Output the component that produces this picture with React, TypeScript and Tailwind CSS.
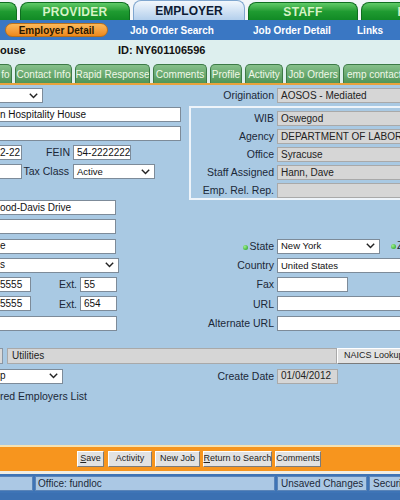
import React from 'react';
import clsx from 'clsx';

const Chev = () => (
  <svg width="9" height="6" viewBox="0 0 9 6" className="shrink-0">
    <path d="M0.8 0.8 L4.5 4.6 L8.2 0.8" fill="none" stroke="#222" strokeWidth="1.4" />
  </svg>
);

type FieldProps = { cls?: string; v?: string; gray?: boolean; cut?: boolean; sm?: boolean };

function Field({ cls, v = '', gray, cut, sm }: FieldProps) {
  return (
    <div
      className={clsx(
        'h-[15px] shrink-0 border flex items-center leading-none whitespace-nowrap overflow-hidden',
        sm ? 'text-[9.5px]' : 'text-[10px]',
        gray ? 'bg-[#d6d6d6] border-[#a9a9a9] text-[#222]' : 'bg-white border-[#7d8b99] text-[#111]',
        cut ? 'border-l-0 pl-0' : 'pl-[3px]',
        cls
      )}
    >
      {v}
    </div>
  );
}

function Select({ cls, v = '', cut, sm }: FieldProps) {
  return (
    <div
      className={clsx(
        'h-[15px] shrink-0 border bg-white border-[#7d8b99] flex items-center justify-between pr-[4px] leading-none whitespace-nowrap overflow-hidden text-[#111]',
        sm ? 'text-[9.5px]' : 'text-[10px]',
        cut ? 'border-l-0 pl-0' : 'pl-[3px]',
        cls
      )}
    >
      <span>{v}</span>
      <Chev />
    </div>
  );
}

function Label({ children, cls }: { children: React.ReactNode; cls?: string }) {
  return (
    <div className={clsx('shrink-0 text-right text-[10.5px] leading-none text-[#1b2838] whitespace-nowrap', cls)}>
      {children}
    </div>
  );
}

function RRow({ label, children, lw = 'w-[85px]' }: { label: React.ReactNode; children: React.ReactNode; lw?: string }) {
  return (
    <div className="flex items-center h-[15px] gap-[3px]">
      <Label cls={lw}>{label}</Label>
      {children}
    </div>
  );
}

function GreenTab({ children, cls }: { children?: React.ReactNode; cls?: string }) {
  return (
    <div
      className={clsx(
        'h-[18px] shrink-0 border border-b-0 border-[#0f6e20] bg-gradient-to-b from-[#5fcb68] via-[#1f9b31] to-[#118a25] flex items-center justify-center text-[12px] font-bold tracking-[0.3px] text-[#d6f3c6]',
        cls
      )}
    >
      {children}
    </div>
  );
}

function SubTab({ children, cls }: { children: React.ReactNode; cls?: string }) {
  return (
    <div
      className={clsx(
        'h-[19px] shrink-0 rounded-t-[5px] border border-b-0 border-[#3c7a46] bg-gradient-to-b from-[#86c08b] to-[#4f9557] flex items-center justify-center text-[10px] text-[#f0f8e8] whitespace-nowrap overflow-hidden',
        cls
      )}
    >
      {children}
    </div>
  );
}

function Dot() {
  return <span className="inline-block w-[5px] h-[5px] rounded-full bg-[radial-gradient(circle_at_35%_35%,#9ef08f,#1c9a1c)] mr-[1px] align-middle" />;
}

function Btn({ children, cls }: { children: React.ReactNode; cls?: string }) {
  return (
    <div
      className={clsx(
        'h-[16px] shrink-0 bg-[#e2e2e2] border border-t-white border-l-white border-b-[#7b7b7b] border-r-[#7b7b7b] flex items-center justify-center text-[9px] text-[#222] whitespace-nowrap',
        cls
      )}
    >
      {children}
    </div>
  );
}

export default function App() {
  return (
    <div className="w-[400px] h-[500px] overflow-hidden flex flex-col bg-[#a9c9e3] font-['Liberation_Sans',Arial,sans-serif]">
      {/* Module tabs */}
      <div className="h-[20px] shrink-0 flex items-end gap-[3px] bg-[#f3f6f9]">
        <GreenTab cls="w-[17px] border-l-0 rounded-tr-[8px]" />
        <GreenTab cls="w-[110px] rounded-t-[8px]">PROVIDER</GreenTab>
        <div className="w-[112px] h-[20px] shrink-0 rounded-t-[8px] border border-b-0 border-[#7fa6cf] bg-gradient-to-b from-[#f2f7fc] to-[#b3cfec] flex justify-center pt-[1px] text-[12px] font-bold text-[#0d1b33]">
          EMPLOYER
        </div>
        <GreenTab cls="w-[110px] rounded-t-[8px]">STAFF</GreenTab>
        <GreenTab cls="w-[110px] rounded-t-[8px]">HOME</GreenTab>
      </div>

      {/* Sub nav */}
      <div className="h-[20px] shrink-0 flex items-center bg-[#3a77c3] text-[10px] font-bold text-white whitespace-nowrap">
        <div className="ml-[5px] w-[103px] h-[14px] shrink-0 rounded-full border border-[#b9701b] bg-gradient-to-b from-[#fbb959] to-[#ee8816] flex items-center justify-center text-[#2a1800]">
          Employer Detail
        </div>
        <span className="ml-[22px] w-[123px] shrink-0">Job Order Search</span>
        <span className="w-[104px] shrink-0">Job Order Detail</span>
        <span className="shrink-0">Links</span>
      </div>

      {/* Title */}
      <div className="h-[21px] shrink-0 flex items-center bg-[#ddefee] text-[11px] font-bold text-[#111] whitespace-nowrap">
        <span className="w-[118px] shrink-0">ouse</span>
        <span>ID: NY601106596</span>
      </div>

      {/* Section tabs */}
      <div className="h-[22px] shrink-0 flex items-end gap-[3px] bg-[#ddefee]">
        <SubTab cls="w-[12px] rounded-tl-none border-l-0">fo</SubTab>
        <SubTab cls="w-[57px]">Contact Info</SubTab>
        <SubTab cls="w-[75px]">Rapid Response</SubTab>
        <SubTab cls="w-[54px]">Comments</SubTab>
        <SubTab cls="w-[32px]">Profile</SubTab>
        <SubTab cls="w-[38px]">Activity</SubTab>
        <SubTab cls="w-[54px]">Job Orders</SubTab>
        <SubTab cls="w-[80px] justify-start pl-[3px]">emp contacts</SubTab>
      </div>
      <div className="h-[2px] shrink-0 bg-[#e9a23c]" />

      {/* Body */}
      <div className="flex-1 min-h-0 overflow-hidden pt-[3px]">
        <div className="flex">
          <div className="w-[189px] shrink-0 flex flex-col">
            <Select cut cls="w-[43px]" />
            <Field cut cls="w-[181px] mt-[4px]" v="n Hospitality House" />
            <Field cut cls="w-[181px] mt-[4px]" />
            <div className="flex items-center h-[15px] mt-[4px]">
              <Field cut cls="w-[22px]" v="2-22" />
              <Label cls="w-[48px]">FEIN</Label>
              <Field cls="w-[58px] ml-[3px]" v="54-2222222" />
            </div>
            <div className="flex items-center h-[15px] mt-[4px]">
              <Field cut cls="w-[22px]" />
              <Label cls="w-[47px]">Tax Class</Label>
              <Select cls="w-[82px] ml-[4px]" v="Active" sm />
            </div>
          </div>
          <div className="w-[260px] shrink-0 flex flex-col">
            <RRow label="Origination">
              <Field gray cls="w-[160px]" v="AOSOS - Mediated" />
            </RRow>
            <div className="mt-[3px] border-t-2 border-l-2 border-b-2 border-[#eef4fa] pt-[3px] flex flex-col gap-[3px]">
              <RRow label="WIB" lw="w-[83px]">
                <Field gray cls="w-[160px]" v="Oswegod" />
              </RRow>
              <RRow label="Agency" lw="w-[83px]">
                <Field gray cls="w-[160px]" v="DEPARTMENT OF LABOR" />
              </RRow>
              <RRow label="Office" lw="w-[83px]">
                <Field gray cls="w-[160px]" v="Syracuse" />
              </RRow>
              <RRow label="Staff Assigned" lw="w-[83px]">
                <Field gray cls="w-[160px]" v="Hann, Dave" />
              </RRow>
              <RRow label="Emp. Rel. Rep." lw="w-[83px]">
                <Field gray cls="w-[160px]" />
              </RRow>
            </div>
          </div>
        </div>

        {/* Address / contact rows */}
        <div className="flex flex-col gap-[4.3px]">
          <div className="flex items-center h-[15px]">
            <Field cut cls="w-[116px]" v="ood-Davis Drive" />
          </div>
          <div className="flex items-center h-[15px]">
            <Field cut cls="w-[116px]" />
          </div>
          <div className="flex items-center h-[15px]">
            <div className="w-[189px] shrink-0">
              <Field cut cls="w-[116px]" v="e" />
            </div>
            <RRow
              label={
                <>
                  <Dot />
                  State
                </>
              }
            >
              <Select cls="w-[103px]" v="New York" sm />
              <span className="ml-[8px] text-[10.5px] text-[#1b2838] whitespace-nowrap">
                <Dot />
                Zip
              </span>
            </RRow>
          </div>
          <div className="flex items-center h-[15px]">
            <div className="w-[189px] shrink-0">
              <Select cut cls="w-[119px]" v="s" />
            </div>
            <RRow label="Country">
              <Field cls="w-[160px]" v="United States" sm />
            </RRow>
          </div>
          <div className="flex items-center h-[15px]">
            <div className="w-[189px] shrink-0 flex items-center">
              <Field cut cls="w-[31px]" v="5555" />
              <Label cls="w-[46px]">Ext.</Label>
              <Field cls="w-[37px] ml-[3px]" v="55" />
            </div>
            <RRow label="Fax">
              <Field cls="w-[71px]" />
            </RRow>
          </div>
          <div className="flex items-center h-[15px]">
            <div className="w-[189px] shrink-0 flex items-center">
              <Field cut cls="w-[31px]" v="5555" />
              <Label cls="w-[46px]">Ext.</Label>
              <Field cls="w-[37px] ml-[3px]" v="654" />
            </div>
            <RRow label="URL">
              <Field cls="w-[160px]" />
            </RRow>
          </div>
          <div className="flex items-center h-[15px]">
            <div className="w-[189px] shrink-0">
              <Field cut cls="w-[117px]" />
            </div>
            <RRow label="Alternate URL">
              <Field cls="w-[160px]" />
            </RRow>
          </div>
        </div>

        {/* Industry */}
        <div className="flex items-center h-[16px] mt-[17px]">
          <div className="w-[3px] h-[16px] shrink-0 border border-l-0 border-[#8a96a3] bg-[#d9d9d9]" />
          <Field gray cls="w-[330px] h-[16px] ml-[4px] pl-[4px]" v="Utilities" />
          <Btn cls="w-[80px] h-[16px] justify-start pl-[6px] text-[9.5px]">NAICS Lookup</Btn>
        </div>
        <div className="flex items-center h-[15px] mt-[5px]">
          <div className="w-[189px] shrink-0">
            <Select cut cls="w-[63px]" v="p" />
          </div>
          <RRow label="Create Date">
            <Field gray cls="w-[61px]" v="01/04/2012" />
          </RRow>
        </div>
        <div className="mt-[6px] text-[10.5px] leading-[13px] text-[#1b2838] whitespace-nowrap">red Employers List</div>
      </div>

      {/* Action bar */}
      <div className="h-[2px] shrink-0 bg-[#f6e2b2]" />
      <div className="h-[24px] shrink-0 bg-[#f7951e] flex items-center">
        <Btn cls="ml-[77px] w-[27px]">
          <span className="underline">S</span>ave
        </Btn>
        <Btn cls="ml-[4px] w-[44px]">Activity</Btn>
        <Btn cls="ml-[3px] w-[45px]">New Job</Btn>
        <Btn cls="ml-[3px] w-[69px]">
          <span className="underline">R</span>eturn to Search
        </Btn>
        <Btn cls="ml-[3px] w-[46px]">Comments</Btn>
      </div>
      <div className="h-[3px] shrink-0 bg-[#f1ede2]" />

      {/* Status bar */}
      <div className="h-[19px] shrink-0 bg-[#3e74b6] flex items-center gap-[2px] py-[2px] text-[10px] text-[#1b2838] whitespace-nowrap">
        <div className="w-[33px] h-[15px] shrink-0 bg-[#abc8e4] border border-l-0 border-[#5a84b8]" />
        <div className="w-[240px] h-[15px] shrink-0 bg-[#abc8e4] border border-[#5a84b8] flex items-center pl-[2px]">Office: fundloc</div>
        <div className="w-[90px] h-[15px] shrink-0 bg-[#abc8e4] border border-[#5a84b8] flex items-center pl-[3px]">Unsaved Changes</div>
        <div className="w-[60px] h-[15px] shrink-0 bg-[#abc8e4] border border-[#5a84b8] flex items-center pl-[3px]">Security</div>
      </div>
      <div className="h-[7px] shrink-0 bg-[#3b70b2]" />
    </div>
  );
}
